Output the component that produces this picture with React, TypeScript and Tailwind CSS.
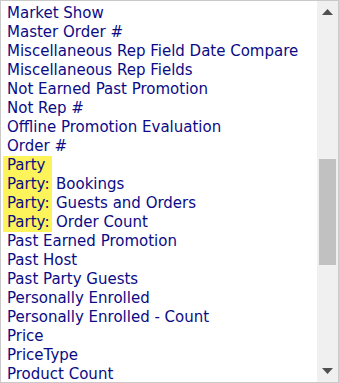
const items = [
  'Market Show',
  'Master Order #',
  'Miscellaneous Rep Field Date Compare',
  'Miscellaneous Rep Fields',
  'Not Earned Past Promotion',
  'Not Rep #',
  'Offline Promotion Evaluation',
  'Order #',
  'Party',
  'Party: Bookings',
  'Party: Guests and Orders',
  'Party: Order Count',
  'Past Earned Promotion',
  'Past Host',
  'Past Party Guests',
  'Personally Enrolled',
  'Personally Enrolled - Count',
  'Price',
  'PriceType',
  'Product Count',
]

function Row({ label }: { label: string }) {
  if (label.startsWith('Party')) {
    const rest = label.slice(6)
    const head = label.startsWith('Party:') ? 'Party:' : 'Party'
    return (
      <div className="h-[19px] flex items-center whitespace-nowrap">
        <span className="bg-[#fcf45a] h-[19px] w-[49px] pl-[4px] flex items-center">{head}</span>
        {rest && <span className="pl-[4px]">{rest.trim()}</span>}
      </div>
    )
  }
  return <div className="h-[19px] flex items-center whitespace-nowrap pl-[4px]">{label}</div>
}

export default function App() {
  return (
    <div className="w-[339px] h-[383px] border border-[#c9c9c9] bg-white flex overflow-hidden">
      <div
        className="flex-1 overflow-hidden pt-[3px] pl-[2px] text-[15px] text-[#0b0b85]"
        style={{ fontFamily: '"DejaVu Sans", Verdana, sans-serif' }}
      >
        {items.map((it) => (
          <Row key={it} label={it} />
        ))}
      </div>
      <div className="w-[21px] bg-[#f0f0f0] flex flex-col items-center">
        <div className="h-[22px] flex items-center justify-center">
          <svg width="11" height="6" viewBox="0 0 11 6">
            <path d="M5.5 0 L11 6 L0 6 Z" fill="#505050" />
          </svg>
        </div>
        <div className="flex-1 w-full flex flex-col">
          <div className="h-[136px]" />
          <div className="h-[106px] mx-[2px] bg-[#c1c1c1]" />
        </div>
        <div className="h-[22px] flex items-center justify-center">
          <svg width="11" height="6" viewBox="0 0 11 6">
            <path d="M0 0 L11 0 L5.5 6 Z" fill="#505050" />
          </svg>
        </div>
      </div>
    </div>
  )
}
